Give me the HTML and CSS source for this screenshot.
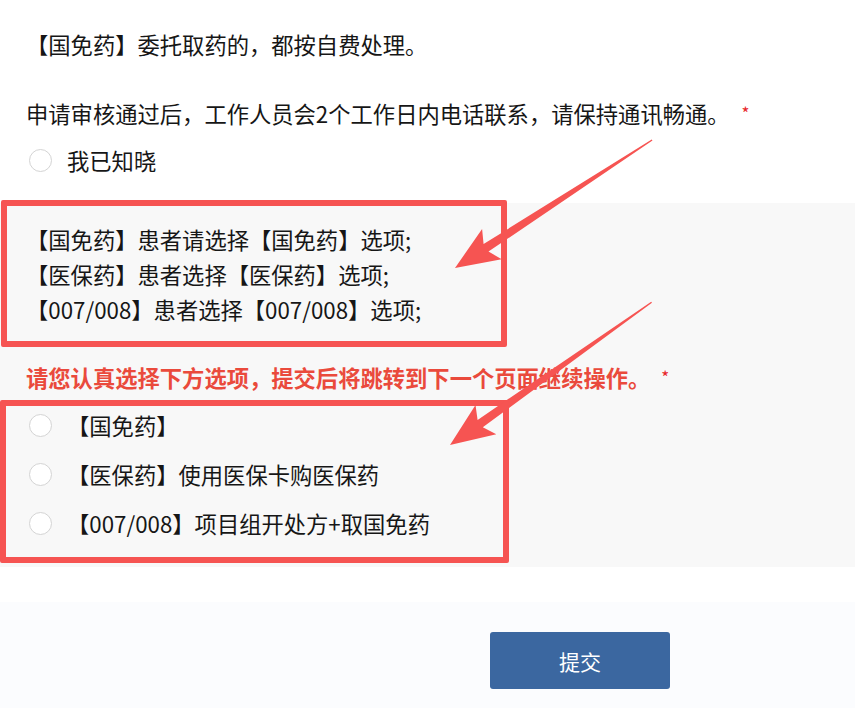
FILE: index.html
```html
<!DOCTYPE html>
<html lang="zh-CN">
<head>
<meta charset="utf-8">
<title>表单</title>
<link rel="stylesheet" href="styles.css">
</head>
<body>
<div class="page">
  <section class="intro">
    <p class="line">【国免药】委托取药的，都按自费处理。</p>
    <p class="line q2">申请审核通过后，工作人员会2个工作日内电话联系，请保持通讯畅通。<span class="req">*</span></p>
    <label class="opt first"><span class="radio"></span><span class="opt-text">我已知晓</span></label>
  </section>
  <section class="gray">
    <div class="desc">
      <p class="line">【国免药】患者请选择【国免药】选项;</p>
      <p class="line">【医保药】患者选择【医保药】选项;</p>
      <p class="line">【007/008】患者选择【007/008】选项;</p>
    </div>
    <p class="line title">请您认真选择下方选项，提交后将跳转到下一个页面继续操作。<span class="req req2">*</span></p>
    <div class="opts">
      <label class="opt"><span class="radio"></span><span class="opt-text">【国免药】</span></label>
      <label class="opt"><span class="radio"></span><span class="opt-text">【医保药】使用医保卡购医保药</span></label>
      <label class="opt"><span class="radio"></span><span class="opt-text">【007/008】项目组开处方+取国免药</span></label>
    </div>
  </section>
  <div class="spacer"></div>
  <footer class="footer">
    <button class="submit" type="button">提交</button>
  </footer>

  <div class="mark mark1"></div>
  <div class="mark mark2"></div>
  <svg class="arrows" width="855" height="708" viewBox="0 0 855 708">
    <g transform="translate(455 268) rotate(-33)">
      <polygon points="0,0 44,-18 37,-4.5 235,-0.7 235,0.7 37,4.5 44,18" fill="#f65452"/>
    </g>
    <g transform="translate(450 445) rotate(-35.3)">
      <polygon points="0,0 44,-18 37,-4.5 247,-0.7 247,0.7 37,4.5 44,18" fill="#f65452"/>
    </g>
  </svg>
</div>
</body>
</html>
```
FILE: styles.css
```css
* { box-sizing: border-box; }
html, body {
  margin: 0;
  padding: 0;
  background: #ffffff;
}
body {
  font-family: "Noto Sans CJK SC", "Microsoft YaHei", sans-serif;
  font-size: 22.3px;
  color: #161616;
}
.page {
  position: relative;
  width: 855px;
  height: 708px;
  overflow: hidden;
}
p { margin: 0; }
.line {
  line-height: 35px;
  white-space: nowrap;
}
.intro {
  padding: 27px 0 25px 26px;
  height: 203px;
}
.q2 { margin-top: 33px; }
.req {
  color: #e8262b;
  font-size: 17px;
  margin-left: 12px;
  vertical-align: 3px;
}
.opt {
  display: flex;
  align-items: center;
  height: 35px;
  line-height: 35px;
  white-space: nowrap;
}
.first { margin-top: 12px; }
.radio {
  width: 23px;
  height: 23px;
  border-radius: 50%;
  border: 1px solid #d4d4d4;
  background: #ffffff;
  margin-left: 3px;
  margin-right: 15px;
  flex: none;
}
.gray {
  background: #f8f8f8;
  height: 364px;
  padding: 19px 0 0 26px;
}
.title {
  margin-top: 32px;
  color: #ea4a3c;
  font-weight: bold;
}
.req2 {
  margin-left: 11px;
  font-weight: normal;
}
.opts {
  margin-top: 13px;
  display: flex;
  flex-direction: column;
  gap: 14px;
}
.spacer { height: 35px; }
.footer {
  background: #fbfcfe;
  height: 106px;
  padding: 30px 0 0 490px;
}
.submit {
  width: 180px;
  height: 57px;
  border: none;
  border-radius: 3px;
  background: #3b67a0;
  color: #ffffff;
  font-family: "Noto Sans CJK SC", "Microsoft YaHei", sans-serif;
  font-size: 21px;
  padding: 0;
}
.mark {
  position: absolute;
  border: 6px solid #f65452;
  border-radius: 2px;
  pointer-events: none;
}
.mark1 {
  left: 1px;
  top: 200px;
  width: 506px;
  height: 147px;
}
.mark2 {
  left: 0;
  top: 400px;
  width: 509px;
  height: 163px;
}
.arrows {
  position: absolute;
  left: 0;
  top: 0;
  pointer-events: none;
}
```
